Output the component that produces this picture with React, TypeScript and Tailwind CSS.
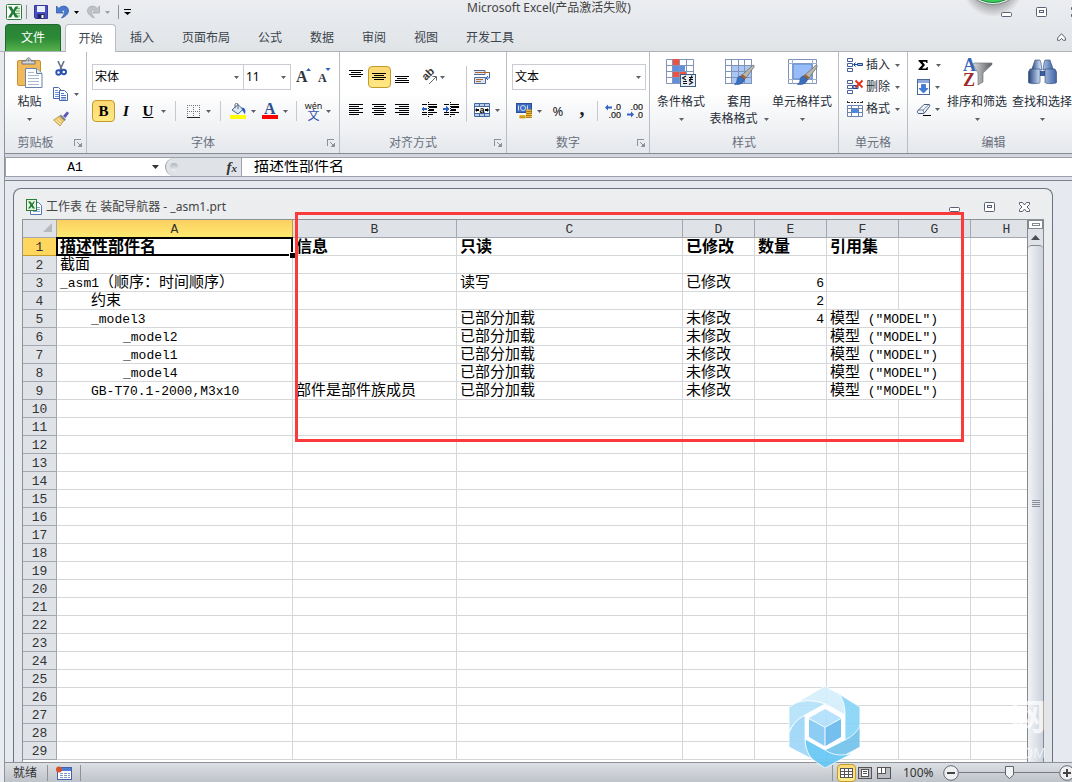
import type { ReactNode } from "react";

const tabs = ["插入", "页面布局", "公式", "数据", "审阅", "视图", "开发工具"];

const columns = [
  { name: "A", width: "w-[236px]" },
  { name: "B", width: "w-[164px]" },
  { name: "C", width: "w-[226px]" },
  { name: "D", width: "w-[72px]" },
  { name: "E", width: "w-[72px]" },
  { name: "F", width: "w-[72px]" },
  { name: "G", width: "w-[72px]" },
  { name: "H", width: "w-[72px]" },
];

type Row = { indent?: number; cells: Record<string, string> };

const MODEL = '模型 ("MODEL")';

const data: Row[] = [
  { cells: { A: "描述性部件名", B: "信息", C: "只读", D: "已修改", E: "数量", F: "引用集" } },
  { cells: { A: "截面" } },
  { cells: { A: "_asm1（顺序：时间顺序）", C: "读写", D: "已修改", E: "6" } },
  { indent: 1, cells: { A: "约束", E: "2" } },
  { indent: 1, cells: { A: "_model3", C: "已部分加载", D: "未修改", E: "4", F: MODEL } },
  { indent: 2, cells: { A: "_model2", C: "已部分加载", D: "未修改", F: MODEL } },
  { indent: 2, cells: { A: "_model1", C: "已部分加载", D: "未修改", F: MODEL } },
  { indent: 2, cells: { A: "_model4", C: "已部分加载", D: "未修改", F: MODEL } },
  { indent: 1, cells: { A: "GB-T70.1-2000,M3x10", B: "部件是部件族成员", C: "已部分加载", D: "未修改", F: MODEL } },
];

const indents = ["pl-[3px]", "pl-[34px]", "pl-[66px]"];

// Latin runs are set a little smaller so they keep half the width of a CJK character
function Mixed({ text }: { text: string }) {
  return (
    <>
      {text.split(/([\x20-\x7e]+)/).map((part, i) =>
        i % 2 ? (
          <span key={i} className="text-[13px] whitespace-pre">{part}</span>
        ) : (
          part
        )
      )}
    </>
  );
}

function Arrow() {
  return (
    <svg width="5" height="3" viewBox="0 0 5 3" className="shrink-0">
      <path d="M0 0h5L2.5 3z" fill="#5c6067" />
    </svg>
  );
}

function Sep({ className = "h-5 bg-[#c6cad0]" }: { className?: string }) {
  return <div className={`w-px shrink-0 ${className}`} />;
}

function Tool({ label, children, arrow, gap = "gap-[5px]" }: { label: string; children: ReactNode; arrow?: boolean; gap?: string }) {
  return (
    <button type="button" aria-label={label} className={`flex shrink-0 items-center ${gap}`}>
      {children}
      {arrow && <Arrow />}
    </button>
  );
}

function Group({ title, width, launcher, children }: { title: string; width: string; launcher?: boolean; children: ReactNode }) {
  return (
    <section className={`flex shrink-0 flex-col border-r border-[#b9bec6] ${width}`}>
      <div className="h-[82px]">{children}</div>
      <div className="flex h-[18px] items-center text-[#686f7d]">
        <div className="flex-1 text-center">{title}</div>
        {launcher && (
          <button type="button" aria-label={`${title}设置`} className="mr-1 flex w-4 justify-end">
            <svg width="8" height="8" viewBox="0 0 8 8" fill="none" stroke="#8c929b" shapeRendering="crispEdges">
              <path d="M.5 7V.5H7M3.500 3.500l3 3M7.500 4v3.500H4M5.500 7V6.500h1V5" />
            </svg>
          </button>
        )}
      </div>
    </section>
  );
}

function Combo({ label, value, className }: { label: string; value: string; className: string }) {
  return (
    <div className={`relative h-[26px] border border-[#c9ccd2] bg-white ${className}`}>
      <select aria-label={label} defaultValue={value} className="h-full w-full appearance-none bg-transparent pl-0.5 text-black outline-none">
        <option>{value}</option>
      </select>
      <div className="pointer-events-none absolute inset-y-0 right-1 flex items-center">
        <Arrow />
      </div>
    </div>
  );
}

function AlignButton({ label, rows, active }: { label: string; rows: [number, number, number][]; active?: boolean }) {
  return (
    <button
      type="button"
      aria-label={label}
      className={`flex h-[22px] w-[23px] items-center justify-center ${
        active ? "rounded-sm border border-[#c29b29] bg-linear-to-b from-[#fbd873] to-[#ffe883]" : ""
      }`}
    >
      <svg width="15" height="16" viewBox="0 0 15 16" shapeRendering="crispEdges">
        {rows.map(([x, y, w]) => (
          <rect key={y} x={x} y={y} width={w} height="1" />
        ))}
      </svg>
    </button>
  );
}

function ExcelLogo() {
  return (
    <svg width="16" height="16" viewBox="0 0 16 16">
      <rect x=".5" y=".5" width="15" height="15" rx="1" fill="#fff" stroke="#2f7d38" />
      <path d="M10 2h4v12h-4z" fill="#dcefd8" />
      <path d="M10 4.500h4M10 7h4M10 9.500h4M10 12h4" stroke="#6fae6c" />
      <path d="M2 2.500h3.500L7.300 6l2-3.500h3L8.900 8l3.600 5.500H9L7.100 10l-2 3.500H2L5.500 8z" fill="#217a35" />
    </svg>
  );
}

function SaveIcon() {
  return (
    <svg width="14" height="14" viewBox="0 0 14 14">
      <path d="M.5.5h13v13h-12l-1-1z" fill="#4a50c4" stroke="#35389b" />
      <path d="M3 1h8v6H3z" fill="#e9f0fc" />
      <path d="M3.500 9h7v4.500h-7z" fill="#23265f" />
      <path d="M7.500 10h2v3h-2z" fill="#fff" />
    </svg>
  );
}

function UndoIcon({ color, edge }: { color: string; edge: string }) {
  return (
    <svg width="13" height="14" viewBox="0 0 13 14">
      <path d="M.5 1v7H7.500L5.200 6C7.300 4.300 9.200 5.500 8.600 7.800 8.200 9.300 7 11 5.500 13c4-1.500 6.800-4 7-7C12.700 1.500 7-1 2.900 3.400z" fill={color} stroke={edge} strokeWidth=".7" />
    </svg>
  );
}

function WindowButtons({ close = true }: { close?: boolean }) {
  return (
    <div className="flex items-end gap-6">
      <button type="button" aria-label="最小化">
        <svg width="11" height="10" viewBox="0 0 11 10">
          <rect x=".5" y="5.500" width="10" height="4" rx="1" fill="#fff" stroke="#5a5f73" />
        </svg>
      </button>
      <button type="button" aria-label="还原">
        <svg width="11" height="10" viewBox="0 0 11 10" fill="#fff" stroke="#5a5f73">
          <rect x=".5" y=".5" width="10" height="9" rx="1" />
          <rect x="3.500" y="3.500" width="4" height="2" />
        </svg>
      </button>
      {close && (
        <button type="button" aria-label="关闭">
          <svg width="11" height="10" viewBox="0 0 11 10">
            <path d="M.5.5h3L5.500 3l2-2.500h3v2L8 5l2.500 2.500v2h-3L5.500 7l-2 2.500h-3v-2L3 5 .5 2.500z" fill="#fff" stroke="#5a5f73" />
          </svg>
        </button>
      )}
    </div>
  );
}

function TitleBar() {
  return (
    <div className="relative flex h-6 items-center">
      <div className="flex w-[140px] items-center pl-1.5">
        <ExcelLogo />
        <Sep className="ml-1 h-[14px] bg-[#8e949c]" />
        <button type="button" aria-label="保存" className="ml-[7px]"><SaveIcon /></button>
        <button type="button" aria-label="撤消" className="ml-2 flex items-center gap-[5px]">
          <UndoIcon color="#4a7ad0" edge="#2450a4" />
          <svg width="5" height="3"><path d="M0 0h5L2.500 3z" /></svg>
        </button>
        <button type="button" aria-label="恢复" className="ml-2 flex items-center gap-[5px]">
          <span className="-scale-x-100"><UndoIcon color="#bfc3c8" edge="#a2a7ad" /></span>
          <svg width="5" height="3" fill="#9a9ea4"><path d="M0 0h5L2.500 3z" /></svg>
        </button>
        <Sep className="ml-2 h-[14px] bg-[#8e949c]" />
        <button type="button" aria-label="自定义快速访问工具栏" className="ml-[5px]">
          <svg width="7" height="6"><path d="M0 0h7v1H0zM0 3h7L3.500 6z" /></svg>
        </button>
      </div>
      <h1 className="flex-1 pb-2 text-center leading-4 text-[#444]">Microsoft Excel(产品激活失败)</h1>
      <div className="flex w-[114px] overflow-hidden pl-[43px]">
        <WindowButtons />
      </div>
      <svg width="60" height="16" viewBox="0 0 60 16" className="absolute top-0 right-[49px]">
        <defs>
          <radialGradient id="halo" cx="30" cy="-14" r="31" gradientUnits="userSpaceOnUse">
            <stop offset=".55" stopColor="#777" stopOpacity=".7" />
            <stop offset="1" stopColor="#777" stopOpacity="0" />
          </radialGradient>
        </defs>
        <circle cx="30" cy="-14" r="31" fill="url(#halo)" />
        <circle cx="30" cy="-26" r="31" fill="#8d8f8e" />
        <circle cx="30" cy="-26" r="30" fill="#e8f5ea" />
        <circle cx="30" cy="-26" r="29" fill="#17803a" />
        <circle cx="30" cy="-27" r="29" fill="#3ccf5f" />
      </svg>
    </div>
  );
}

function TabStrip() {
  return (
    <nav className="flex h-7 items-end border-b border-[#adb2b8] pl-[5px] text-[#3c434d]">
      <button type="button" className="h-[27px] w-14 rounded-t-sm border border-b-0 border-[#1d6b2c] bg-linear-to-b from-[#2c8237] via-[#2a8a36] to-[#56b04b] text-white">
        文件
      </button>
      <button type="button" className="-mb-px ml-1 h-7 w-[51px] rounded-t-sm border border-b-0 border-[#b9bec5] bg-white">
        开始
      </button>
      {tabs.map((tab) => (
        <button key={tab} type="button" className="h-[27px] px-3.5">
          {tab}
        </button>
      ))}
      <button type="button" aria-label="功能区最小化" className="mr-1.5 mb-2.5 ml-auto">
        <svg width="9" height="8" viewBox="0 0 9 8">
          <path d="M4.500.7 8.400 5v2.300H6.300L4.500 5.400 2.700 7.300H.6V5z" fill="#fff" stroke="#5a5f73" />
        </svg>
      </button>
    </nav>
  );
}

function ClipboardGroup() {
  return (
    <Group title="剪贴板" width="w-[82px]" launcher>
      <div className="flex gap-2.5 pt-[5px] pl-[11px]">
        <button type="button" className="flex w-[27px] flex-col items-center">
          <svg width="27" height="31" viewBox="0 0 27 31">
            <rect x="1.500" y="3.500" width="23" height="25" rx="1.500" fill="#f0b95a" stroke="#c98f35" />
            <path d="M6 7V4h4c0-4 5-4 5 0h4v3z" fill="#d4d7db" stroke="#6f747c" />
            <circle cx="12.500" cy="3.500" r="1" fill="#6f747c" />
            <path d="M9.500 11.500h11l5.500 5v14H9.500z" fill="#fff" stroke="#6982ab" />
            <path d="M20.500 11.500v5H26" fill="#dfe8f5" stroke="#6982ab" />
            <path d="M12 15.500h6M12 18.500h11M12 21.500h11M12 24.500h11M12 27.500h11" stroke="#a9b9d1" />
          </svg>
          <span className="mt-[5px] leading-[18px]">粘贴</span>
          <span className="flex h-4 items-center"><Arrow /></span>
        </button>
        <div className="flex flex-col items-start gap-[9px] pt-1">
          <Tool label="剪切">
            <svg width="16" height="16" viewBox="0 0 16 16" fill="none">
              <path d="M5 0l4 9M11 0L7 9" stroke="#67718a" strokeWidth="1.600" />
              <circle cx="5.500" cy="11.500" r="2.200" stroke="#2a52b0" strokeWidth="1.900" />
              <circle cx="10.800" cy="11" r="2.200" stroke="#2a52b0" strokeWidth="1.900" />
            </svg>
          </Tool>
          <Tool label="复制" arrow>
            <svg width="16" height="16" viewBox="0 0 16 16" fill="#fff" stroke="#4669ae">
              <path d="M.5 1.500h5l3 3v8h-8z" />
              <path d="M2 4.500h3M2 6.500h4M2 8.500h4M2 10.500h4" stroke="#6f93d8" />
              <path d="M6.500 4.500h5l3 3v7h-8z" />
              <path d="M8 7.500h3M8 9.500h5M8 11.500h5M8 13h5" stroke="#4d78c8" />
            </svg>
          </Tool>
          <Tool label="格式刷">
            <svg width="16" height="16" viewBox="0 0 16 16">
              <path d="M10 5l4-4.500 2 1.500-3.500 5z" fill="#5b54b8" />
              <path d="M8 3.500l5 5-1.500 1.500-5-5z" fill="#7e8592" />
              <path d="M6.500 5L11 9.500 7 15 .5 9z" fill="#ecc66a" stroke="#a27a2c" strokeWidth=".6" />
              <path d="M2.500 9l5 4.500M4.500 7.500l4 4" stroke="#fff2c4" />
            </svg>
          </Tool>
        </div>
      </div>
    </Group>
  );
}

function FontGroup() {
  return (
    <Group title="字体" width="w-[253px]" launcher>
      <div className="flex flex-col gap-2.5 pt-3 pl-[5px]">
        <div className="flex items-center">
          <Combo label="字体" value="宋体" className="w-[152px]" />
          <Combo label="字号" value="11" className="-ml-px w-12" />
          <button type="button" aria-label="增大字号" className="ml-1">
            <svg width="18" height="20" viewBox="0 0 18 20">
              <text x="1" y="15" fontSize="16" fontWeight="bold" fontFamily="Liberation Serif, serif" fill="#30343b">A</text>
              <path d="M11 4h5l-2.500-3z" fill="#3263b8" />
            </svg>
          </button>
          <button type="button" aria-label="减小字号" className="ml-1">
            <svg width="16" height="20" viewBox="0 0 16 20">
              <text x="1" y="15" fontSize="12" fontWeight="bold" fontFamily="Liberation Serif, serif" fill="#30343b">A</text>
              <path d="M8.500 1h5L11 4z" fill="#3263b8" />
            </svg>
          </button>
        </div>
        <div className="flex h-[22px] items-center font-['Liberation_Serif',serif] text-[15px] text-black">
          <button type="button" className="h-[22px] w-[23px] rounded-sm border border-[#c29b29] bg-linear-to-b from-[#fbd873] to-[#ffe883] font-bold">
            B
          </button>
          <button type="button" className="ml-px w-5 font-bold italic">I</button>
          <button type="button" className="ml-1 flex items-center gap-[5px] font-bold underline">
            <span className="w-4 text-center">U</span>
            <Arrow />
          </button>
          <Sep className="mx-[9px] h-5 bg-[#c6cad0]" />
          <Tool label="边框" arrow>
            <svg width="16" height="16" viewBox="0 0 16 16" stroke="#222" fill="none" shapeRendering="crispEdges">
              <path d="M2 2.500h12M2 8.500h12M2.500 2v12M8.500 2v12M14.500 2v12" strokeDasharray="1 1" stroke="#777" />
              <path d="M2 14.500h13" />
            </svg>
          </Tool>
          <Sep className="mx-[9px] h-5 bg-[#c6cad0]" />
          <Tool label="填充颜色" arrow>
            <svg width="16" height="16" viewBox="0 0 16 16">
              <path d="M2 7l6-5.500 5 5L8 11z" fill="#dbe7f7" stroke="#4a658f" />
              <path d="M5 5V1.500C5 0 8 0 8 1.500V6" fill="none" stroke="#5e6675" />
              <path d="M11.500 4.500c4 0 4.500 3 3.500 6.500-1.500-.5-1.500-3-3-4z" fill="#2d63b9" />
              <path d="M0 12h16v4H0z" fill="#ff0" />
            </svg>
          </Tool>
          <div className="w-1.5" />
          <Tool label="字体颜色" arrow>
            <svg width="16" height="18" viewBox="0 0 16 18">
              <text x="2" y="12" fontSize="16" fontWeight="bold" fontFamily="Liberation Serif, serif" fill="#2f4f8f">A</text>
              <path d="M0 13h16v4H0z" fill="#f00" />
            </svg>
          </Tool>
          <Sep className="mx-2 h-5 bg-[#c6cad0]" />
          <Tool label="拼音" arrow gap="gap-1">
            <span className="flex w-[17px] flex-col items-center font-['Noto_Sans','Noto_Sans_CJK_SC',sans-serif]">
              <span className="text-[9px] leading-[9px] text-[#222]">wén</span>
              <span className="text-[12px] leading-[12px] text-[#2d4fae]">文</span>
            </span>
          </Tool>
        </div>
      </div>
    </Group>
  );
}

function IndentIcon({ flip }: { flip?: boolean }) {
  return (
    <svg width="16" height="16" viewBox="0 0 16 16" shapeRendering="crispEdges">
      <path d="M1 2h5v1H1zM8 2h8v1H8zM8 4h8v2H8zM8 7h5v2H8zM1 10h5v1H1zM8 10h8v1H8zM1 12h5v1H1zM8 12h4v1H8z" fill="#000" />
      <path d="M7.500 0v15" stroke="#000" strokeDasharray="1 1" />
      <path d={flip ? "M0 6h3V4l3 3-3 3V8H0z" : "M6 6H3V4L0 7l3 3V8h3z"} fill="#2f62c4" />
    </svg>
  );
}

function AlignmentGroup() {
  return (
    <Group title="对齐方式" width="w-[167px]" launcher>
      <div className="flex items-center pt-3 pl-[5px]">
        <div className="flex flex-col gap-[7px]">
          <div className="flex h-[26px] items-center">
            <AlignButton label="顶端对齐" rows={[[0, 1, 14], [2, 3, 10], [0, 5, 14], [2, 7, 10]]} />
            <AlignButton label="垂直居中" active rows={[[0, 4, 14], [2, 6, 10], [0, 8, 14], [2, 10, 10]]} />
            <AlignButton label="底端对齐" rows={[[0, 7, 14], [2, 9, 10], [0, 11, 14], [0, 13, 14]]} />
            <div className="w-2" />
            <Tool label="方向" arrow gap="gap-0.5">
              <svg width="16" height="16" viewBox="0 0 16 16">
                <text x="0" y="0" fontSize="11" fontWeight="bold" fontFamily="Liberation Sans, sans-serif" fill="#333" transform="translate(4 12) rotate(-45)">ab</text>
                <path d="M7 15l7-7M10.500 7.500h4v4" fill="none" stroke="#666" />
              </svg>
            </Tool>
          </div>
          <div className="flex h-[26px] items-center">
            <AlignButton label="左对齐" rows={[[0, 2, 14], [0, 4, 10], [0, 6, 14], [0, 8, 10], [0, 10, 14], [0, 12, 10]]} />
            <AlignButton label="居中" rows={[[0, 2, 14], [2, 4, 10], [0, 6, 14], [2, 8, 10], [0, 10, 14], [2, 12, 10]]} />
            <AlignButton label="右对齐" rows={[[0, 2, 14], [4, 4, 10], [0, 6, 14], [4, 8, 10], [0, 10, 14], [4, 12, 10]]} />
            <div className="w-[7px]" />
            <Tool label="减少缩进量"><IndentIcon /></Tool>
            <div className="w-1.5" />
            <Tool label="增加缩进量"><IndentIcon flip /></Tool>
          </div>
        </div>
        <Sep className="mx-[7px] h-14 bg-[#c6cad0]" />
        <div className="flex flex-col gap-[7px]">
          <div className="flex h-[26px] items-center">
            <Tool label="自动换行">
              <svg width="16" height="16" viewBox="0 0 16 16" fill="none">
                <path d="M0 1.500h11v4H0M.5 8.500h11v6H.5z" fill="#dce6f5" stroke="#4f6a9a" />
                <path d="M1 3.500h15" stroke="#b4652a" />
                <path d="M2 10.500h7M2 12.500h5" stroke="#b4652a" />
                <path d="M15.500 4v5h-3m1.500-2l-2 2 2 2" stroke="#2f62c4" />
              </svg>
            </Tool>
          </div>
          <div className="flex h-[26px] items-center">
            <Tool label="合并后居中" arrow>
              <svg width="16" height="16" viewBox="0 0 16 16">
                <path d="M.5 1.500h15v13H.5zM.5 4.500h15M.5 11.500h15M5.500 1.500v3M10.500 1.500v3M5.500 11.500v3M10.500 11.500v3" fill="#b9cdec" stroke="#44669f" />
                <path d="M1 5h14v6H1z" fill="#fff" />
                <path d="M1 8l2-2v1h2v2H3v1zM15 8l-2-2v1h-2v2h2v1z" />
                <text x="8" y="11" fontSize="9" fontWeight="bold" textAnchor="middle" fontFamily="Liberation Sans, sans-serif">a</text>
              </svg>
            </Tool>
          </div>
        </div>
      </div>
    </Group>
  );
}

function DecimalIcon({ less }: { less?: boolean }) {
  return (
    <svg width="16" height="16" viewBox="0 0 16 16" fontSize="9" fontFamily="Liberation Sans, sans-serif" fill="#222" stroke="#222" strokeWidth=".2">
      <text x="16" y="7" textAnchor="end">{less ? ".00" : ".0"}</text>
      <text x="16" y="15" textAnchor="end">{less ? ".0" : ".00"}</text>
      <path d={less ? "M0 10.500h4V8.500l3 3-3 3v-2H0z" : "M7 3.500H3v-2l-3 3 3 3v-2h4z"} fill="#2f62c4" stroke="none" />
    </svg>
  );
}

function NumberGroup() {
  return (
    <Group title="数字" width="w-[143px]" launcher>
      <div className="flex flex-col gap-2.5 pt-3 pl-[5px]">
        <Combo label="数字格式" value="文本" className="w-[134px]" />
        <div className="flex h-[22px] items-center pl-1">
          <Tool label="会计数字格式" arrow>
            <svg width="16" height="16" viewBox="0 0 16 16">
              <rect x=".5" y=".5" width="15" height="9" fill="#3f6cc0" stroke="#2b4f97" />
              <ellipse cx="7" cy="5" rx="2.500" ry="2.500" fill="none" stroke="#cfdef5" />
              <path d="M2.500 2.500v5M11.500 2.500v4" stroke="#cfdef5" />
              <path d="M10 6.500h5.500v8H10zM3.500 12h6v3.500h-6z" fill="#f0b52f" />
              <path d="M10 8.500h6M10 10.500h6M10 12.500h6M10 14.500h6M3.500 14h6" stroke="#9a6a12" strokeWidth=".8" />
            </svg>
          </Tool>
          <button type="button" className="ml-2 w-4 text-[13px] text-[#222]">%</button>
          <button type="button" className="ml-2 w-4 pb-1.5 font-['Liberation_Serif',serif] text-[20px] leading-4 font-bold text-[#222]">,</button>
          <Sep className="mx-[7px] h-5 bg-[#c6cad0]" />
          <Tool label="增加小数位数"><DecimalIcon /></Tool>
          <div className="w-1.5" />
          <Tool label="减少小数位数"><DecimalIcon less /></Tool>
        </div>
      </div>
    </Group>
  );
}

function Brush() {
  return (
    <>
      <path d="M29 8c1 0 1.500 1 1 2l-8 11-4-3z" fill="#b9b6ae" stroke="#66645e" strokeWidth=".7" />
      <path d="M18 17l4.500 3.500-2 2.500-4.500-3.500z" fill="#a06432" />
      <path d="M16 19l4.500 3.500c-1 4-5 5.500-10 5 2-1.500 2.500-3 2.500-5 .5-2 1.500-3 3-3.500z" fill="#3a6fbe" stroke="#264f91" strokeWidth=".6" />
    </>
  );
}

function BigButton({ label, icon, second, width }: { label: string; icon: ReactNode; second?: string; width: string }) {
  return (
    <button type="button" className={`flex shrink-0 flex-col items-center ${width}`}>
      {icon}
      <span className="mt-[5px] leading-[18px] whitespace-nowrap">{label}</span>
      <span className="flex h-4 items-center gap-1.5 whitespace-nowrap">
        {second}
        <Arrow />
      </span>
    </button>
  );
}

function StylesGroup() {
  return (
    <Group title="样式" width="w-[189px]">
      <div className="flex gap-0.5 pt-[5px] pl-1.5">
        <BigButton
          label="条件格式"
          width="w-[50px]"
          icon={
            <svg width="31" height="31" viewBox="0 0 31 31">
              <path d="M.5 2.500h27v24H.5z" fill="#fff" stroke="#8295b8" />
              <path d="M7 2h7v7H7zM7 15h13v5H7z" fill="#f1523f" />
              <path d="M7 9h12v6H7zM7 21h6v5H7z" fill="#5f8fe0" />
              <path d="M6.500 2v25M13.500 2v25M20.500 2v25M0 8.500h28M0 14.500h28M0 20.500h28" stroke="#8295b8" />
              <rect x="14.500" y="17.500" width="15" height="12" fill="#e9eff7" stroke="#3f5c85" />
              <path d="M20 19l-3.500 2 3.500 2M17 24.500h4M17 26.500h4M23 20.500h4M23 22.500h4M26 18.500l-2 5M23 23.500l3.500 2-3.500 2" fill="none" stroke="#111" strokeWidth="1.100" />
            </svg>
          }
        />
        <BigButton
          label="套用"
          second="表格格式"
          width="w-[62px]"
          icon={
            <svg width="31" height="31" viewBox="0 0 31 31">
              <path d="M1.500 2.500h26v24h-26z" fill="#fff" />
              <path d="M8 9h20v18H8z" fill="#a9c6f5" />
              <path d="M1.500 2v25M7.500 2v25M14.500 2v25M20.500 2v25M27.500 2v25M1 2.500h27M1 8.500h27M1 14.500h27M1 20.500h27M1 26.500h27" stroke="#7f93b9" fill="none" />
              <Brush />
            </svg>
          }
        />
        <BigButton
          label="单元格样式"
          width="w-[60px]"
          icon={
            <svg width="31" height="31" viewBox="0 0 31 31">
              <path d="M1.500 2.500h28v24h-28z" fill="#fff" stroke="#7f93b9" />
              <path d="M1 6.500h29M1 22.500h29M5.500 2v25M25.500 2v25" stroke="#9fb0cc" />
              <path d="M6 7h19v15H6z" fill="#97bcf7" stroke="#5f86c8" />
              <Brush />
            </svg>
          }
        />
      </div>
    </Group>
  );
}

function CellsGroup() {
  const boxes = <path d="M.5 1.500h5v3h-5zM.5 6.500h5v3h-5zM.5 11.500h5v3h-5z" fill="#fff" stroke="#44618f" />;
  const items = [
    { label: "插入", art: <>{boxes}<path d="M7 7.500h3M8.500 5.500l-2 2 2 2M10.500 6.500h5v2h-5z" fill="#9cc0f2" stroke="#23478c" /></> },
    { label: "删除", art: <>{boxes}<path d="M6 6.500h5v3H6z" fill="#9cc0f2" stroke="#23478c" /><path d="M8.500 1.500l7 7M15.500 1.500l-7 7" stroke="#e2331d" strokeWidth="2" /></> },
    {
      label: "格式",
      art: (
        <>
          <path d="M.5 4.500h15v11H.5zM4.500 4v11M11.500 4v11M0 7.500h16M0 11.500h16" fill="#fff" stroke="#6b83ad" />
          <path d="M5 8h6v4H5z" fill="#4e87e0" />
          <path d="M.5 0v3M15.500 0v3M1 1.500h14" stroke="#333" strokeDasharray="2 1" />
        </>
      ),
    },
  ];
  return (
    <Group title="单元格" width="w-[69px]">
      <div className="flex flex-col items-start gap-1 pt-1 pl-2">
        {items.map((item) => (
          <button key={item.label} type="button" className="flex h-[18px] items-center">
            <svg width="16" height="16" viewBox="0 0 16 16" fill="none">{item.art}</svg>
            <span className="mr-[5px] ml-[3px]">{item.label}</span>
            <Arrow />
          </button>
        ))}
      </div>
    </Group>
  );
}

function EditingGroup() {
  return (
    <Group title="编辑" width="w-[172px]">
      <div className="flex">
        <div className="flex flex-col items-start gap-1 pt-1 pl-2">
          <div className="flex h-[18px] items-center">
            <Tool label="自动求和" arrow gap="gap-1.5">
              <svg width="14" height="14" viewBox="0 0 14 14">
                <path d="M2.500 2h9v3h-1l-.7-1.200H6.500L9 7l-3 3.500h4l1-1.500h.8v3H2.500v-1l3.700-4-3.700-4z" />
              </svg>
            </Tool>
          </div>
          <div className="flex h-[18px] items-center">
            <Tool label="填充" arrow gap="gap-1">
              <svg width="15" height="16" viewBox="0 0 15 16">
                <rect x="1.500" y=".5" width="12" height="15" fill="#fff" stroke="#4a6899" />
                <path d="M2 1h11v3H2z" fill="#8eace0" />
                <path d="M5.500 5.500h4v4h2.500l-4.500 4.500L3 9.500h2.500z" fill="#3f7be0" stroke="#2556ae" strokeWidth=".6" />
              </svg>
            </Tool>
          </div>
          <div className="flex h-[18px] items-center">
            <Tool label="清除" arrow gap="gap-1">
              <svg width="15" height="16" viewBox="0 0 15 16">
                <path d="M1.500 10L8 3.500h5c1 0 1.200 1 .5 2L8 12.500H3c-1.500 0-2-1.500-1.500-2.500z" fill="#eef2f9" stroke="#4a5d80" />
                <path d="M2 9h5l6-5.500M7 9l1 3" stroke="#4a5d80" strokeWidth=".7" fill="none" />
                <path d="M7 14.500h8" stroke="#000" />
              </svg>
            </Tool>
          </div>
        </div>
        <div className="flex gap-[5px] pt-[5px] pl-1.5">
          <BigButton
            label="排序和筛选"
            width="w-[60px]"
            icon={
              <svg width="31" height="31" viewBox="0 0 31 31" fontFamily="Liberation Serif, serif" fontWeight="bold" fontSize="18">
                <defs>
                  <linearGradient id="funnel">
                    <stop stopColor="#d6d8da" />
                    <stop offset="1" stopColor="#5a5d61" />
                  </linearGradient>
                </defs>
                <path d="M12 6h18v1.500L21 16v9l-5 3V16l-5-8.500z" fill="url(#funnel)" stroke="#77797d" strokeWidth=".7" />
                <text x="1" y="14" fill="#3a63b5">A</text>
                <text x="1" y="29" fill="#9e2b2b">Z</text>
              </svg>
            }
          />
          <BigButton
            label="查找和选择"
            width="w-[60px]"
            icon={
              <svg width="31" height="31" viewBox="0 0 31 31">
                <defs>
                  <linearGradient id="barrel">
                    <stop stopColor="#27457c" />
                    <stop offset=".4" stopColor="#c9daf3" />
                    <stop offset="1" stopColor="#3d62a3" />
                  </linearGradient>
                </defs>
                <path d="M12 14h7v5h-7z" fill="#3a5c9a" />
                <path d="M8 3h5l1 3 1 7H4.500L7 6zM18 3h5l1 3 2.500 7H16l1-7z" fill="url(#barrel)" stroke="#2c4678" strokeWidth=".6" />
                <path d="M1.500 15l1.500-3h10v13.500c0 1.500-11.500 1.500-11.500 0zM18 12h10l1.500 3v10.500c0 1.500-11.500 1.500-11.500 0z" fill="url(#barrel)" stroke="#2c4678" strokeWidth=".6" />
              </svg>
            }
          />
        </div>
      </div>
    </Group>
  );
}

function FormulaBar() {
  return (
    <div className="flex h-7 flex-col border-t border-b border-t-[#878c94] border-b-[#808186] bg-linear-to-b from-[#d2d6dc] to-[#dddfea] pt-[3px] text-[15px] text-black">
      <div className="flex h-5 border-y border-[#9aa1ac] bg-white font-['Liberation_Mono','Noto_Sans_CJK_SC',monospace]">
        <div className="flex w-[158px] items-center justify-between border-l border-[#9aa1ac] pr-1">
          <input aria-label="名称框" defaultValue="A1" className="w-[138px] bg-transparent pt-0.5 text-center text-[13px] outline-none" />
          <svg width="7" height="4"><path d="M0 0h7L3.500 4z" fill="#333" /></svg>
        </div>
        <div className="ml-0.5 flex w-[77px] items-center justify-between rounded-l-full border-r border-l border-[#9aa1ac] bg-[#dfe3e8] pr-1 pl-1">
          <span className="h-2 w-2 rounded-full bg-linear-to-b from-[#aeb3ba] to-[#f2f4f6]" />
          <button type="button" className="font-['Liberation_Serif',serif] text-[15px] leading-4 font-bold text-[#333] italic">
            f<span className="text-[11px]">x</span>
          </button>
        </div>
        <input aria-label="编辑栏" defaultValue="描述性部件名" className="min-w-0 flex-1 pt-0.5 pl-3 outline-none" />
      </div>
    </div>
  );
}

function SheetRow({ index }: { index: number }) {
  const row = data[index];
  const selected = index === 0;
  return (
    <tr className="h-[18px]">
      <th
        scope="row"
        className={`border-r border-b p-0 text-center font-normal text-[#333] ${
          selected ? "border-[#c79a2b] bg-[#ffd75e]" : "border-[#a3a8b0] bg-[#dfe3e8]"
        }`}
      >
        <div className="h-[17px] leading-5">{index + 1}</div>
      </th>
      {columns.map(({ name }) => {
        const text = row?.cells[name] ?? "";
        // long text in F runs on over the empty G cell
        const spill = row?.cells.F === MODEL;
        if (spill && name === "G") return null;
        return (
          <td key={name} colSpan={spill && name === "F" ? 2 : 1} className="relative border-r border-b border-[#d6d7d9] p-0">
            <div
              className={`h-[17px] leading-5 whitespace-nowrap ${selected ? "text-[16px] font-bold" : "text-[15px]"} ${
                name === "A" ? indents[row?.indent ?? 0] : name === "E" && !selected ? "pr-0.5 text-right" : "pl-[3px]"
              }`}
            >
              <Mixed text={text} />
            </div>
            {selected && name === "A" && (
              <>
                <div className="absolute -top-px -right-px -bottom-px -left-px border-2 border-black" />
                <div className="absolute -right-[3px] -bottom-[3px] z-10 h-[6px] w-[6px] border-t border-l border-white bg-black" />
              </>
            )}
          </td>
        );
      })}
    </tr>
  );
}

function Scrollbar() {
  return (
    <div className="flex w-[17px] shrink-0 flex-col border-x border-[#84898f] bg-[#dfe2e7]">
      <div className="flex h-[9px] items-center justify-center border border-[#84898f] bg-white">
        <div className="h-[3px] w-2 border border-[#84898f]" />
      </div>
      <button type="button" aria-label="向上滚动" className="flex h-4 items-center justify-center">
        <svg width="9" height="5"><path d="M4.500 0L9 5H0z" fill="#4a4e54" /></svg>
      </button>
      <div className="flex flex-1 flex-col items-center justify-center rounded-t-sm border-t border-[#84898f] bg-linear-to-r from-[#f1f3f5] to-[#cdd2de]">
        <svg width="8" height="8" stroke="#8a909a" shapeRendering="crispEdges">
          <path d="M0 .5h8M0 2.500h8M0 4.500h8M0 6.500h8" />
        </svg>
      </div>
    </div>
  );
}

function WorkbookWindow() {
  return (
    <div className="mt-[7px] mr-[19px] ml-2 flex min-h-0 flex-1 flex-col rounded-t-lg border border-b-0 border-[#6c737d] bg-linear-to-b from-[#eceef0] to-[#e2e5e9]">
      <div className="flex h-[30px] shrink-0 items-center pr-[22px] pl-3">
        <svg width="16" height="16" viewBox="0 0 16 16" className="mt-1.5">
          <path d="M4.500 3.500h8l3 3v9h-11z" fill="#fff" stroke="#5476b4" />
          <path d="M10 8.500h4M10 10.500h4M7 12.500h7" stroke="#86a4d8" />
          <rect x=".5" y=".5" width="10" height="11" fill="#e6f3e3" stroke="#2b7d36" />
          <path d="M2 2.500h2.500L6 4.800l1.500-2.300H9L6.800 6 9 9.500H6.800L5.500 7.400 4 9.500H2L4.500 6z" fill="#217a35" />
        </svg>
        <h2 className="ml-1 flex-1 pt-1.5 leading-4 text-[#444]">工作表 在 装配导航器 - _asm1.prt</h2>
        <div className="pt-1.5"><WindowButtons /></div>
      </div>
      <div className="mr-2 ml-2 flex min-h-0 flex-1 border-t border-[#8d9298]">
        <div className="relative min-w-0 flex-1">
          <div className="h-full overflow-hidden border-l border-[#8d9298] bg-white font-['Liberation_Mono','Noto_Sans_CJK_SC',monospace] text-[13px] leading-[17px] text-black">
            <table className="w-[1020px] table-fixed border-separate border-spacing-0">
              <thead>
                <tr className="h-[18px] text-[#333]">
                  <th className="w-[34px] border-r border-b border-[#a3a8b0] bg-[#dfe3e8] p-0 align-bottom">
                    <svg width="10" height="10" className="mb-1 ml-5"><path d="M9 0v9H0z" fill="#b5bac1" /></svg>
                  </th>
                  {columns.map(({ name, width }) => (
                    <th
                      key={name}
                      scope="col"
                      className={`border-r border-b p-0 font-normal ${width} ${
                        name === "A" ? "border-[#c79a2b] bg-linear-to-b from-[#fbd060] to-[#ffea70]" : "border-[#a3a8b0] bg-[#dfe3e8]"
                      }`}
                    >
                      <div className="h-[17px] leading-5">{name}</div>
                    </th>
                  ))}
                </tr>
              </thead>
              <tbody>
                {Array.from({ length: 29 }, (_, i) => (
                  <SheetRow key={i} index={i} />
                ))}
              </tbody>
            </table>
          </div>
          {/* marked range */}
          <div className="absolute -top-2 left-[273px] h-[230px] w-[669px] border-3 border-[#fb3b3b]" />
        </div>
        <Scrollbar />
      </div>
    </div>
  );
}

function Watermark() {
  return (
    <div className="pointer-events-none absolute right-[26px] bottom-[13px] flex items-start">
      <svg width="74" height="84" viewBox="788 686 74 84" className="opacity-90">
        <g stroke="#fff" strokeWidth=".8">
          <path d="M825 687l-29 17c18-4 22-1 30 1l19 11c0-14-3-24-8-22z" fill="#d3effc" />
          <path d="M839 695l21 13v20c-3 6-8 11-15 15v-28c0-8-2-15-6-20z" fill="#86d4f8" />
          <path d="M860 726v22l-22 12c-3 0-9-3-13-9l20-10c8-4 13-9 15-15z" fill="#70c2ec" />
          <path d="M805 740l20 11c9 6 18 6 28 3l-28 15-13-9c-5-5-7-11-7-20z" fill="#62c6f5" />
          <path d="M805 716v24c0 7 2 14 7 20l-23-12v-14c3-8 8-14 16-18z" fill="#9bd7f7" />
          <path d="M796 704c10-4 22-2 29 1l-20 11c-8 4-13 10-16 17v-25z" fill="#b3e2fa" />
        </g>
        <path d="M825 705l20 11v24l-20 11-20-11v-24z" fill="#fff" />
        <path d="M825 710l16 9-16 9-16-9z" fill="#b0dffb" />
        <path d="M809 720l15.500 8.500V747l-15.500-9z" fill="#82c8f2" />
        <path d="M841 720l-15.500 8.500V747l15.500-9z" fill="#65b9ec" />
      </svg>
      <div className="flex w-[184px] flex-col items-end gap-1.5 pt-3 text-white opacity-70">
        <span className="text-[36px] leading-10 font-bold">网</span>
        <span className="text-[14px] leading-5">.COM</span>
      </div>
    </div>
  );
}

function StatusBar() {
  return (
    <footer className="flex h-5 shrink-0 items-center border-t border-[#8e939a] bg-linear-to-b from-[#dcdfe3] to-[#bfc4ca] pl-2 text-[#333]">
      <span className="w-[34px]">就绪</span>
      <Sep className="h-4 bg-[#8e939a]" />
      <button type="button" aria-label="录制宏" className="mx-2">
        <svg width="16" height="14" viewBox="0 0 16 14">
          <rect x="1.500" y="1.500" width="14" height="12" fill="#fff" stroke="#3f62a8" />
          <path d="M2 2h13v3H2z" fill="#4d7fd8" />
          <path d="M4 7.500h3M8 7.500h3M12 7.500h2M4 9.500h3M8 9.500h3M12 9.500h2M4 11.500h3M8 11.500h3M12 11.500h2" stroke="#7f99c8" />
          <circle cx="3" cy="3.500" r="3" fill="#d9502c" />
        </svg>
      </button>
      <Sep className="h-4 bg-[#8e939a]" />
      <div className="-mr-[3px] ml-auto flex items-center">
        <Sep className="h-4 bg-[#8e939a]" />
        <button type="button" aria-label="普通" className="ml-1 flex h-[18px] w-[19px] items-center justify-center rounded-sm border border-[#c29b29] bg-linear-to-b from-[#fbd873] to-[#ffee8e]">
          <svg width="13" height="10" fill="#fff" stroke="#555" shapeRendering="crispEdges">
            <path d="M.5.5h12v9H.5zM4.500 0v10M8.500 0v10M0 3.500h13M0 6.500h13" />
          </svg>
        </button>
        <button type="button" aria-label="页面布局视图" className="ml-0.5">
          <svg width="14" height="12" fill="#b9bdc3" stroke="#555" shapeRendering="crispEdges">
            <path d="M.5.5h13v11H.5z" />
            <path d="M3.500 2.500h7v7h-7z" fill="#fff" />
            <path d="M5 4.500h4M5 6.500h4" />
          </svg>
        </button>
        <button type="button" aria-label="分页预览" className="ml-[5px]">
          <svg width="14" height="12" fill="#b9bdc3" stroke="#555" shapeRendering="crispEdges">
            <path d="M.5.5h13v11H.5z" />
            <path d="M.5.5h4v6h-4zM4.500.5h4v6h-4z" fill="#fff" />
          </svg>
        </button>
        <span className="ml-3 w-10">100%</span>
        <button type="button" aria-label="缩小">
          <svg width="16" height="16"><circle cx="8" cy="8" r="7.300" fill="#eef0f2" stroke="#666b73" /><path d="M4 7h8v2H4z" fill="#444" /></svg>
        </button>
        <label className="relative flex h-4 w-[100px] items-center">
          <span className="h-px w-full bg-[#777c84]" />
          <svg width="9" height="13" viewBox="0 0 9 13" className="absolute left-[46px]">
            <path d="M.5.5h8V9l-4 3.500L.5 9z" fill="#f3f4f6" stroke="#5f646c" />
          </svg>
          <input type="range" aria-label="显示比例" className="absolute inset-0 w-full opacity-0" />
        </label>
        <button type="button" aria-label="放大">
          <svg width="16" height="16"><circle cx="8" cy="8" r="7.300" fill="#eef0f2" stroke="#666b73" /><path d="M4 7h3V4h2v3h3v2H9v3H7V9H4z" fill="#444" /></svg>
        </button>
      </div>
    </footer>
  );
}

export default function App() {
  return (
    <div className="relative flex h-screen flex-col overflow-hidden bg-[#e8ebef] font-['Noto_Sans','Noto_Sans_CJK_SC',sans-serif] text-[12px] leading-4">
      <header className="shrink-0 bg-linear-to-b from-[#ebedf1] to-[#e0e4e7]">
        <TitleBar />
        <TabStrip />
      </header>
      <main className="ml-1 flex min-h-0 flex-1 flex-col border-l border-[#8e939a] bg-[#e6e9ef]">
        <div className="flex h-[101px] shrink-0 overflow-hidden bg-linear-to-b from-white from-40% to-[#e5e8ec] text-[#262d38]">
          <ClipboardGroup />
          <FontGroup />
          <AlignmentGroup />
          <NumberGroup />
          <StylesGroup />
          <CellsGroup />
          <EditingGroup />
        </div>
        <FormulaBar />
        <WorkbookWindow />
        <StatusBar />
      </main>
      <Watermark />
    </div>
  );
}
